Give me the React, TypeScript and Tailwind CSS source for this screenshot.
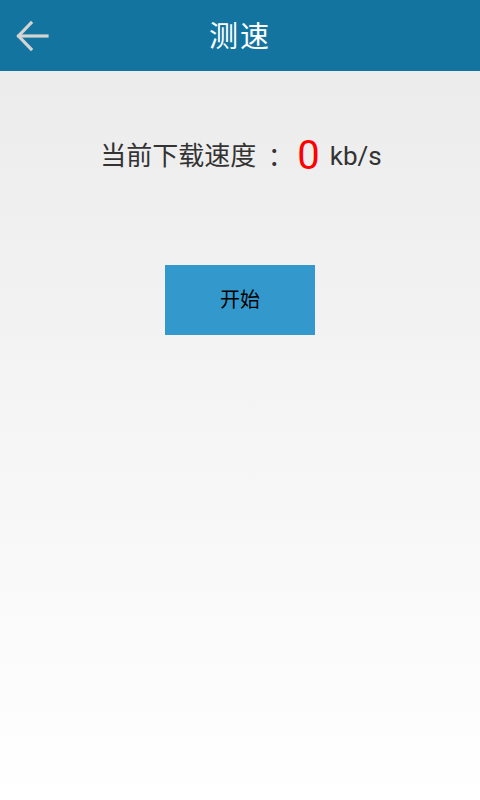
import React from 'react';

const font = { fontFamily: '"Roboto", "Noto Sans CJK SC", sans-serif' };
const tcFont = { fontFamily: '"Noto Sans CJK TC", sans-serif' };

const SpeedTest = () => {
  return (
    <div className="w-[480px] h-[800px] flex flex-col bg-gradient-to-b from-[#eaeaea] to-[#ffffff]" style={font}>
      {/* title bar */}
      <div className="h-[71px] bg-[#13759f] relative flex items-center justify-center">
        <button className="absolute left-[14px] top-[19px] w-[36px] h-[34px] flex items-center justify-center">
          <svg width="34" height="32" viewBox="0 0 34 32" fill="none" stroke="#d4d4d4" strokeWidth="3.2" strokeLinecap="square">
            <path d="M4 16 H32" />
            <path d="M16 3 L3.5 16 L16 29" />
          </svg>
        </button>
        <h1 className="text-white text-[29px] leading-none tracking-[2px] mt-[4px]">测速</h1>
      </div>
      <div className="h-px bg-[#e8eef2]" />

      {/* current speed */}
      <div className="mt-[64px] flex items-end justify-center pl-[2px]">
        <span className="text-[#333333] text-[26px] leading-none mb-[3px]">当前下载速度</span>
        <span className="text-[#333333] text-[26px] leading-none mb-[3px] ml-[5px]" style={tcFont}>：</span>
        <span className="text-[#ff0000] text-[40px] leading-none ml-[10px] -mb-[4px]">0</span>
        <span className="text-[#333333] text-[26px] leading-none ml-[10px] mb-[3px]">kb/s</span>
      </div>

      {/* start button */}
      <div className="mt-[93px] flex justify-center">
        <button className="w-[150px] h-[70px] bg-[#3399cc] text-black text-[20px] flex items-center justify-center">
          开始
        </button>
      </div>
    </div>
  );
};

export default function App() {
  return <SpeedTest />;
}
